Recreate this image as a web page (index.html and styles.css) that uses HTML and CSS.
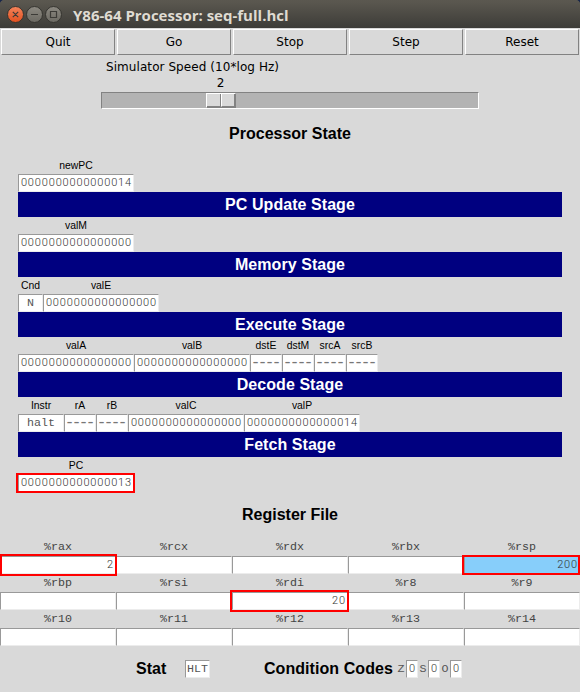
FILE: index.html
```html
<!DOCTYPE html>
<html lang="en">
<head>
<meta charset="utf-8">
<title>Y86-64 Processor: seq-full.hcl</title>
<link rel="stylesheet" href="styles.css">
</head>
<body>
<header class="titlebar">
  <svg class="controls" width="64" height="28" viewBox="0 0 64 28">
    <defs>
      <linearGradient id="close" x1="0" y1="0" x2="0" y2="1"><stop offset="0" stop-color="#f4845b"/><stop offset="1" stop-color="#e3501f"/></linearGradient>
      <linearGradient id="plain" x1="0" y1="0" x2="0" y2="1"><stop offset="0" stop-color="#8c8981"/><stop offset="1" stop-color="#6b6962"/></linearGradient>
    </defs>
    <g stroke="#35342f" stroke-width="1">
      <circle cx="15.5" cy="14.5" r="8" fill="url(#close)"/>
      <circle cx="34.5" cy="14.5" r="8" fill="url(#plain)"/>
      <circle cx="53.5" cy="14.5" r="8" fill="url(#plain)"/>
    </g>
    <g fill="none" stroke="#3c3b37" stroke-width="1.2">
      <path d="M12.8 11.8l5.4 5.4M18.2 11.8l-5.4 5.4M31 14.5h7M50.5 11.5h6v6h-6z"/>
    </g>
  </svg>
  <h1 class="title">Y86-64 Processor: seq-full.hcl</h1>
</header>
<nav class="toolbar">
  <button class="button">Quit</button><button class="button">Go</button><button class="button">Stop</button><button class="button">Step</button><button class="button">Reset</button>
</nav>
<section class="speed">
  <div class="speed-label">Simulator Speed (10*log Hz)</div>
  <div class="speed-value">2</div>
  <div class="track"><div class="thumb"><i></i><i></i></div></div>
</section>
<h2 class="heading heading-state">Processor State</h2>
<main class="stages">
  <div class="row"><div class="cell word"><span class="label">newPC</span><span class="field num">0000000000000014</span></div></div>
  <h3 class="bar">PC Update Stage</h3>
  <div class="row"><div class="cell word"><span class="label">valM</span><span class="field num">0000000000000000</span></div></div>
  <h3 class="bar">Memory Stage</h3>
  <div class="row"><div class="cell flag"><span class="label">Cnd</span><span class="field">N</span></div><div class="cell word"><span class="label">valE</span><span class="field num">0000000000000000</span></div></div>
  <h3 class="bar">Execute Stage</h3>
  <div class="row"><div class="cell word"><span class="label">valA</span><span class="field num">0000000000000000</span></div><div class="cell word"><span class="label">valB</span><span class="field num">0000000000000000</span></div><div class="cell reg"><span class="label">dstE</span><span class="field none">----</span></div><div class="cell reg"><span class="label">dstM</span><span class="field none">----</span></div><div class="cell reg"><span class="label">srcA</span><span class="field none">----</span></div><div class="cell reg"><span class="label">srcB</span><span class="field none">----</span></div></div>
  <h3 class="bar">Decode Stage</h3>
  <div class="row"><div class="cell instr"><span class="label">Instr</span><span class="field">halt</span></div><div class="cell reg"><span class="label">rA</span><span class="field none">----</span></div><div class="cell reg"><span class="label">rB</span><span class="field none">----</span></div><div class="cell word"><span class="label">valC</span><span class="field num">0000000000000000</span></div><div class="cell word"><span class="label">valP</span><span class="field num">0000000000000014</span></div></div>
  <h3 class="bar">Fetch Stage</h3>
  <div class="row"><div class="cell word mark mark-pc"><span class="label">PC</span><span class="field num">0000000000000013</span></div></div>
</main>
<h2 class="heading heading-registers">Register File</h2>
<section class="registers">
  <div class="register mark mark-rax"><span class="name">%rax</span><span class="field num">2</span></div>
  <div class="register"><span class="name">%rcx</span><span class="field"></span></div>
  <div class="register"><span class="name">%rdx</span><span class="field"></span></div>
  <div class="register"><span class="name">%rbx</span><span class="field"></span></div>
  <div class="register mark mark-rsp"><span class="name">%rsp</span><span class="field num active">200</span></div>
  <div class="register"><span class="name">%rbp</span><span class="field"></span></div>
  <div class="register"><span class="name">%rsi</span><span class="field"></span></div>
  <div class="register mark mark-rdi"><span class="name">%rdi</span><span class="field num">20</span></div>
  <div class="register"><span class="name">%r8</span><span class="field"></span></div>
  <div class="register"><span class="name">%r9</span><span class="field"></span></div>
  <div class="register"><span class="name">%r10</span><span class="field"></span></div>
  <div class="register"><span class="name">%r11</span><span class="field"></span></div>
  <div class="register"><span class="name">%r12</span><span class="field"></span></div>
  <div class="register"><span class="name">%r13</span><span class="field"></span></div>
  <div class="register"><span class="name">%r14</span><span class="field"></span></div>
</section>
<footer class="status">
  <span class="status-title stat">Stat</span><span class="field stat-field">HLT</span>
  <span class="status-title codes">Condition Codes</span>
  <span class="code">Z</span><span class="field num bit">0</span>
  <span class="code">S</span><span class="field num bit">0</span>
  <span class="code">O</span><span class="field num bit">0</span>
</footer>
</body>
</html>
```
FILE: styles.css
```css
* { box-sizing: border-box; }
body {
  margin: 0;
  width: 580px;
  height: 692px;
  overflow: hidden;
  background: #d9d9d9;
  color: #000;
  font-family: "Liberation Sans", sans-serif;
}
h1, h2, h3 { margin: 0; }

.titlebar {
  display: flex;
  height: 28px;
  background:
    radial-gradient(circle at 5px 5px, transparent 5px, #18264a 5.8px) 0 0 / 5px 5px no-repeat,
    radial-gradient(circle at 0 5px, transparent 5px, #18264a 5.8px) 100% 0 / 5px 5px no-repeat,
    linear-gradient(#5b5850 0, #5a574f 2px, #3d3c38 28px);
}
.controls { flex: none; }
.title {
  margin-left: 9px;
  color: #dfdbd2;
  font: bold 15px/30px "Open Sans", sans-serif;
  letter-spacing: 0;
  white-space: nowrap;
}

.toolbar { display: flex; height: 28px; }
.button {
  flex: 1;
  margin: 1px;
  padding: 0 0 1px;
  border: 1px solid;
  border-color: #fff #828282 #828282 #fff;
  background: #d9d9d9;
  color: #000;
  font: 12px/22px "DejaVu Sans", sans-serif;
}

.speed {
  margin: 3px 101px 0;
  height: 50px;
  font: 12px/16px "DejaVu Sans", sans-serif;
}
.speed-label { padding-left: 5px; letter-spacing: 0.07px; }
.speed-value { width: 239px; text-align: center; }
.track {
  height: 17px;
  margin-top: 1px;
  border: 1px solid;
  border-color: #828282 #fff #fff #828282;
  background: #b3b3b3;
}
.thumb {
  display: flex;
  width: 30px;
  height: 15px;
  margin-left: 104px;
  border: 1px solid;
  border-color: #fff #828282 #828282 #fff;
}
.thumb i {
  flex: 1;
  border: solid;
  border-width: 0 1px 1px 0;
  border-color: #828282;
  background: #d9d9d9;
}
.thumb i + i { border-left: 1px solid #fff; }

.heading {
  font-size: 16px;
  line-height: 20px;
  text-align: center;
}
.heading-state { margin-top: 15px; height: 33px; }
.heading-registers { margin-top: 13px; height: 33px; }

.stages { margin: 0 18px; }
.row { display: flex; height: 35px; }
.cell { display: flex; flex-direction: column; flex: none; }
.word { width: 116px; }
.reg { width: 32px; }
.flag { width: 25px; }
.instr { width: 46px; }
.label {
  height: 17px;
  font-size: 10.4px;
  line-height: 17px;
  text-align: center;
  white-space: nowrap;
}
.field {
  display: block;
  height: 18px;
  border: 1px solid;
  border-color: #999 #ececec #ececec #999;
  background: #fff;
  color: #555;
  font: 11.67px/16px "Liberation Mono", monospace;
  text-align: center;
  white-space: nowrap;
}
.num {
  padding-right: 1px;
  font-family: Roboto, sans-serif;
  font-size: 11px;
  font-weight: 300;
  letter-spacing: 0.84px;
  text-align: right;
  color: #333;
}
.none {
  color: #777;
  font-size: 16px;
  letter-spacing: -2.6px;
  text-indent: -2.6px;
}
.active { background: #87cefa; }
.bar {
  height: 25px;
  background: #000080;
  color: #fff;
  font-size: 16px;
  letter-spacing: 0.06px;
  line-height: 25px;
  text-align: center;
}

.mark { position: relative; }
.mark::after {
  content: "";
  position: absolute;
  border: 2px solid #f00;
}
.mark-pc::after { inset: 16px -1px -1px -2px; }
.mark-rax::after { inset: 16px -1px -2px 0; }
.mark-rsp::after { inset: 17px 0 -1px -2px; }
.mark-rdi::after { inset: 16px -1px -2px -2px; }

.registers {
  display: grid;
  grid-template-columns: repeat(5, 116px);
  grid-auto-rows: 36px;
}
.name {
  display: block;
  height: 18px;
  color: #444;
  font: 11.67px/18px "Liberation Mono", monospace;
  text-align: center;
}

.status { display: flex; margin-top: 14px; height: 18px; }
.status-title { font-size: 16px; font-weight: bold; line-height: 17px; white-space: nowrap; }
.stat { margin-left: 136px; width: 49px; }
.stat-field { width: 25px; }
.codes { margin-left: 54px; width: 132px; letter-spacing: 0.06px; }
.code {
  width: 10px;
  text-align: center;
  color: #555;
  font: 11.67px/18px "Liberation Mono", monospace;
}
.code + .bit { width: 12px; }
```
